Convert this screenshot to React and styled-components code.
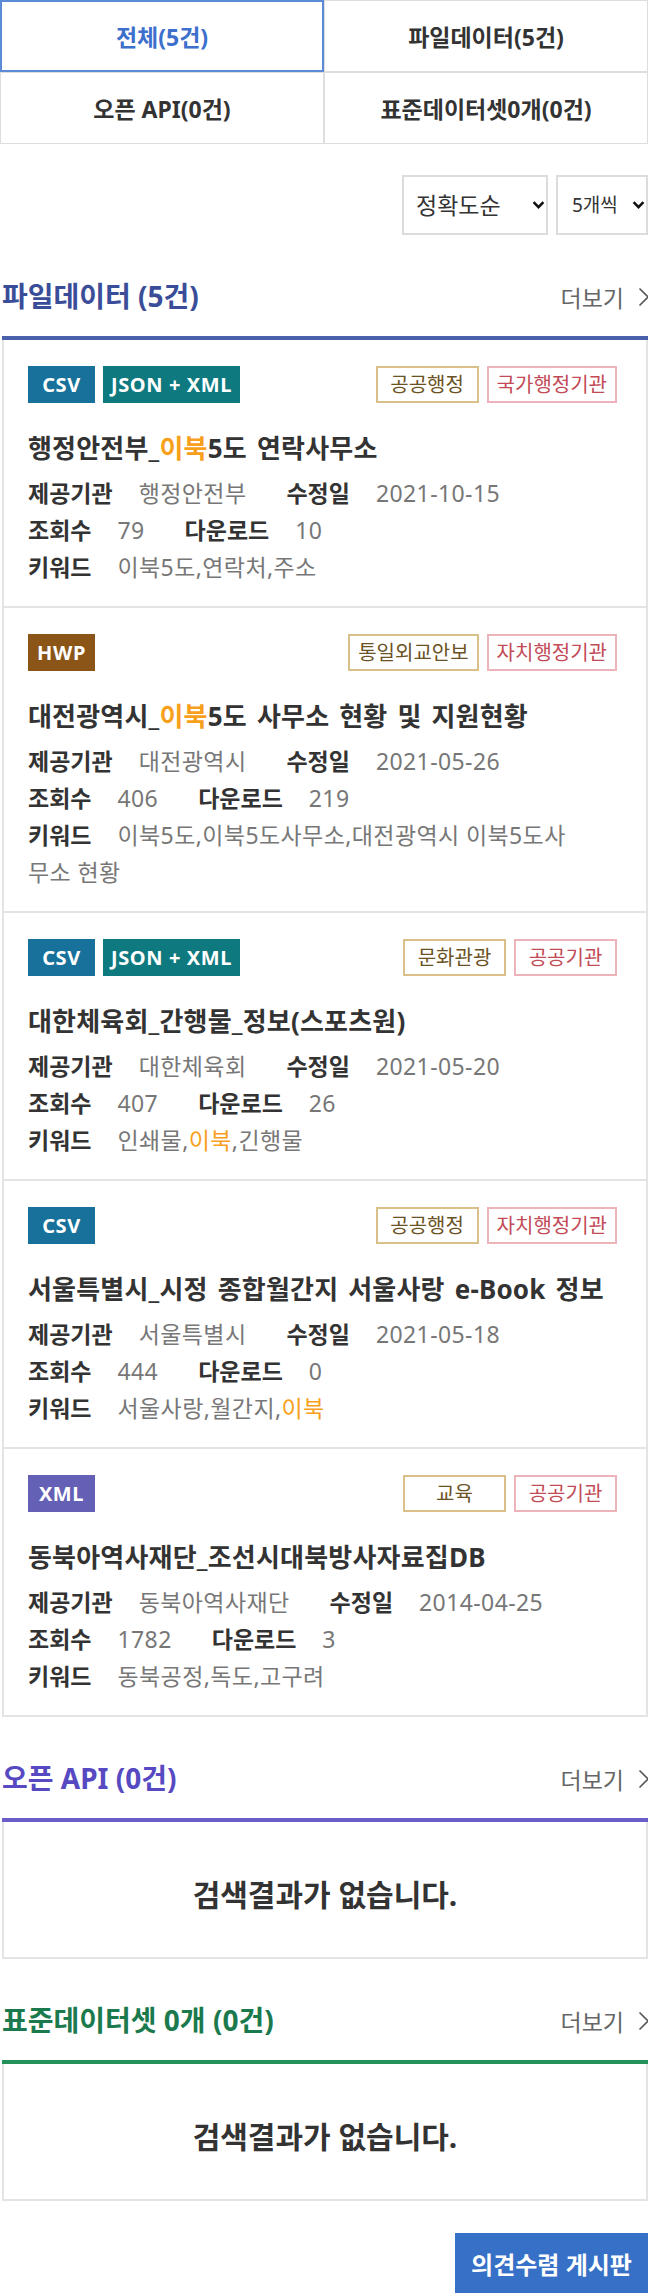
import React from 'react';
import styled, { createGlobalStyle } from 'styled-components';

const GlobalStyle = createGlobalStyle`
  html, body { margin: 0; padding: 0; background: #fff; overflow-x: hidden; }
  body { font-family: "Noto Sans", "Noto Sans CJK KR", sans-serif; color: #333; }
  *, *::before, *::after { box-sizing: border-box; }
`;

const Page = styled.div`
  width: 648px;
`;

const TabGrid = styled.nav`
  display: grid;
  grid-template-columns: 1fr 1fr;
`;

const Tab = styled.button`
  height: 72px;
  margin: 0;
  padding: 0;
  border: 1px solid #dedede;
  background: #fff;
  font-family: inherit;
  font-size: 23px;
  font-weight: 700;
  color: ${p => (p.$active ? '#3d6fcc' : '#333')};
  outline: ${p => (p.$active ? '2px solid #5b8ad8' : 'none')};
  outline-offset: -2px;
  cursor: pointer;
`;

const Main = styled.main`
  padding-left: 2px;
`;

const Controls = styled.div`
  display: flex;
  justify-content: flex-end;
  gap: 8px;
  margin-top: 31px;
`;

const SelectWrap = styled.div`
  position: relative;
  width: ${p => p.$w}px;
  height: 60px;
`;

const Select = styled.select`
  appearance: none;
  -webkit-appearance: none;
  width: 100%;
  height: 100%;
  margin: 0;
  border: 2px solid #dcdcdc;
  border-radius: 0;
  background: #fff;
  font-family: inherit;
  font-size: ${p => p.$fs}px;
  color: #333;
  padding: 0 0 0 ${p => p.$pl}px;
`;

const SelectArrow = styled.svg`
  position: absolute;
  right: 3px;
  top: 50%;
  transform: translateY(-50%);
  pointer-events: none;
`;

const SectionHead = styled.div`
  display: flex;
  justify-content: space-between;
  align-items: baseline;
  padding: 40px 0 19px;
`;

const SectionTitle = styled.h2`
  margin: 0;
  font-size: 28px;
  line-height: 42px;
  font-weight: 700;
  color: ${p => p.$color};
`;

const More = styled.a`
  display: inline-flex;
  align-items: center;
  gap: 14px;
  margin-right: -2px;
  font-size: 23px;
  color: #666;
  text-decoration: none;
  cursor: pointer;
`;

const ResultBody = styled.div`
  border-top: 4px solid ${p => p.$color};
`;

const Card = styled.article`
  border: 2px solid #e4e4e4;
  border-top: none;
  padding: 26px 29px 20px 24px;
`;

const BadgeRow = styled.div`
  display: flex;
  justify-content: space-between;
  align-items: center;
  height: 37px;
`;

const BadgeGroup = styled.div`
  display: flex;
  gap: 8px;
`;

const FormatBadge = styled.span`
  display: inline-block;
  min-width: 67px;
  height: 37px;
  padding: 0 8px;
  background: ${p => p.$bg};
  color: #fff;
  font-size: 20px;
  font-weight: 700;
  letter-spacing: 0.6px;
  line-height: 37px;
  text-align: center;
`;

const Tag = styled.span`
  display: inline-block;
  min-width: 103px;
  height: 37px;
  padding: 0 8px;
  border: 2px solid ${p => p.$border};
  color: ${p => p.$color};
  font-size: 20px;
  line-height: 33px;
  text-align: center;
`;

const CardTitle = styled.h3`
  margin: 22px 0 0;
  font-size: 26px;
  line-height: 46px;
  font-weight: 700;
  letter-spacing: 0.2px;
  word-spacing: 3px;
  color: #333;
  white-space: nowrap;
`;

const Hl = styled.em`
  font-style: normal;
  color: #f8a01c;
`;

const MetaList = styled.div`
  margin-top: 4px;
  padding-right: 50px;
`;

const MetaRow = styled.div`
  font-size: 23px;
  line-height: 37px;
`;

const Label = styled.strong`
  font-weight: 700;
  color: #333;
  margin-right: 26px;
`;

const Value = styled.span`
  color: #777;
  letter-spacing: 0.4px;
  margin-right: ${p => (p.$last ? 0 : 40)}px;
`;

const EmptyBox = styled.div`
  border: 2px solid #e4e4e4;
  border-top: none;
  padding: 52px 0 42px;
  text-align: center;
  font-size: 30px;
  line-height: 41px;
  font-weight: 700;
  color: #333;
`;

const Footer = styled.div`
  display: flex;
  justify-content: flex-end;
  margin-top: 32px;
  padding-bottom: 30px;
`;

const FeedbackButton = styled.button`
  width: 193px;
  height: 60px;
  margin: 0;
  border: none;
  background: #3670c7;
  color: #fff;
  font-family: inherit;
  font-size: 24px;
  font-weight: 700;
  cursor: pointer;
`;

const FORMAT_COLORS = {
  CSV: '#17719b',
  'JSON + XML': '#0e7a7f',
  HWP: '#8b5518',
  XML: '#6460b5',
};

const H = text => ({ hl: text });

const renderParts = parts =>
  parts.map((p, i) => (typeof p === 'string' ? <React.Fragment key={i}>{p}</React.Fragment> : <Hl key={i}>{p.hl}</Hl>));

const cards = [
  {
    formats: ['CSV', 'JSON + XML'],
    tags: ['공공행정', '국가행정기관'],
    title: ['행정안전부_', H('이북'), '5도 연락사무소'],
    org: '행정안전부',
    date: '2021-10-15',
    views: 79,
    downloads: 10,
    keywords: ['이북5도,연락처,주소'],
  },
  {
    formats: ['HWP'],
    tags: ['통일외교안보', '자치행정기관'],
    title: ['대전광역시_', H('이북'), '5도 사무소 현황 및 지원현황'],
    org: '대전광역시',
    date: '2021-05-26',
    views: 406,
    downloads: 219,
    keywords: ['이북5도,이북5도사무소,대전광역시 이북5도사무소 현황'],
  },
  {
    formats: ['CSV', 'JSON + XML'],
    tags: ['문화관광', '공공기관'],
    title: ['대한체육회_간행물_정보(스포츠원)'],
    org: '대한체육회',
    date: '2021-05-20',
    views: 407,
    downloads: 26,
    keywords: ['인쇄물,', H('이북'), ',긴행물'],
  },
  {
    formats: ['CSV'],
    tags: ['공공행정', '자치행정기관'],
    title: ['서울특별시_시정 종합월간지 서울사랑 e-Book 정보'],
    org: '서울특별시',
    date: '2021-05-18',
    views: 444,
    downloads: 0,
    keywords: ['서울사랑,월간지,', H('이북')],
  },
  {
    formats: ['XML'],
    tags: ['교육', '공공기관'],
    title: ['동북아역사재단_조선시대북방사자료집DB'],
    org: '동북아역사재단',
    date: '2014-04-25',
    views: 1782,
    downloads: 3,
    keywords: ['동북공정,독도,고구려'],
  },
];

const Chevron = () => (
  <svg width="12" height="20" viewBox="0 0 12 20" aria-hidden="true">
    <path d="M1.5 1.5 L10 10 L1.5 18.5" fill="none" stroke="#555" strokeWidth="1.6" />
  </svg>
);

const Arrow = () => (
  <SelectArrow width="13" height="9" viewBox="0 0 13 9" aria-hidden="true">
    <path d="M1.6 1.6 L6.5 6.6 L11.4 1.6" fill="none" stroke="#111" strokeWidth="2.6" />
  </SelectArrow>
);

const Header = ({ title, color }) => (
  <SectionHead>
    <SectionTitle $color={color}>{title}</SectionTitle>
    <More>
      더보기
      <Chevron />
    </More>
  </SectionHead>
);

const DataCard = ({ c }) => (
  <Card>
    <BadgeRow>
      <BadgeGroup>
        {c.formats.map(f => (
          <FormatBadge key={f} $bg={FORMAT_COLORS[f]}>
            {f}
          </FormatBadge>
        ))}
      </BadgeGroup>
      <BadgeGroup>
        <Tag $border="#d9bf88" $color="#6b5224">
          {c.tags[0]}
        </Tag>
        <Tag $border="#eeb3ba" $color="#c24b57">
          {c.tags[1]}
        </Tag>
      </BadgeGroup>
    </BadgeRow>
    <CardTitle>{renderParts(c.title)}</CardTitle>
    <MetaList>
      <MetaRow>
        <Label>제공기관</Label>
        <Value>{c.org}</Value>
        <Label>수정일</Label>
        <Value $last>{c.date}</Value>
      </MetaRow>
      <MetaRow>
        <Label>조회수</Label>
        <Value>{c.views}</Value>
        <Label>다운로드</Label>
        <Value $last>{c.downloads}</Value>
      </MetaRow>
      <MetaRow>
        <Label>키워드</Label>
        <Value $last>{renderParts(c.keywords)}</Value>
      </MetaRow>
    </MetaList>
  </Card>
);

export default function App() {
  return (
    <Page>
      <GlobalStyle />
      <TabGrid>
        <Tab $active>전체(5건)</Tab>
        <Tab>파일데이터(5건)</Tab>
        <Tab>오픈 API(0건)</Tab>
        <Tab>표준데이터셋0개(0건)</Tab>
      </TabGrid>
      <Main>
        <Controls>
          <SelectWrap $w={146}>
            <Select $fs={23} $pl={12} defaultValue="acc">
              <option value="acc">정확도순</option>
              <option value="new">최신순</option>
            </Select>
            <Arrow />
          </SelectWrap>
          <SelectWrap $w={92}>
            <Select $fs={19} $pl={14} defaultValue="5">
              <option value="5">5개씩</option>
              <option value="10">10개씩</option>
            </Select>
            <Arrow />
          </SelectWrap>
        </Controls>

        <section>
          <Header title="파일데이터 (5건)" color="#3a4d98" />
          <ResultBody $color="#4a60ab">
            {cards.map((c, i) => (
              <DataCard key={i} c={c} />
            ))}
          </ResultBody>
        </section>

        <section>
          <Header title="오픈 API (0건)" color="#5649c2" />
          <ResultBody $color="#6a5dca">
            <EmptyBox>검색결과가 없습니다.</EmptyBox>
          </ResultBody>
        </section>

        <section>
          <Header title="표준데이터셋 0개 (0건)" color="#1b7a4d" />
          <ResultBody $color="#24915b">
            <EmptyBox>검색결과가 없습니다.</EmptyBox>
          </ResultBody>
        </section>

        <Footer>
          <FeedbackButton>의견수렴 게시판</FeedbackButton>
        </Footer>
      </Main>
    </Page>
  );
}
